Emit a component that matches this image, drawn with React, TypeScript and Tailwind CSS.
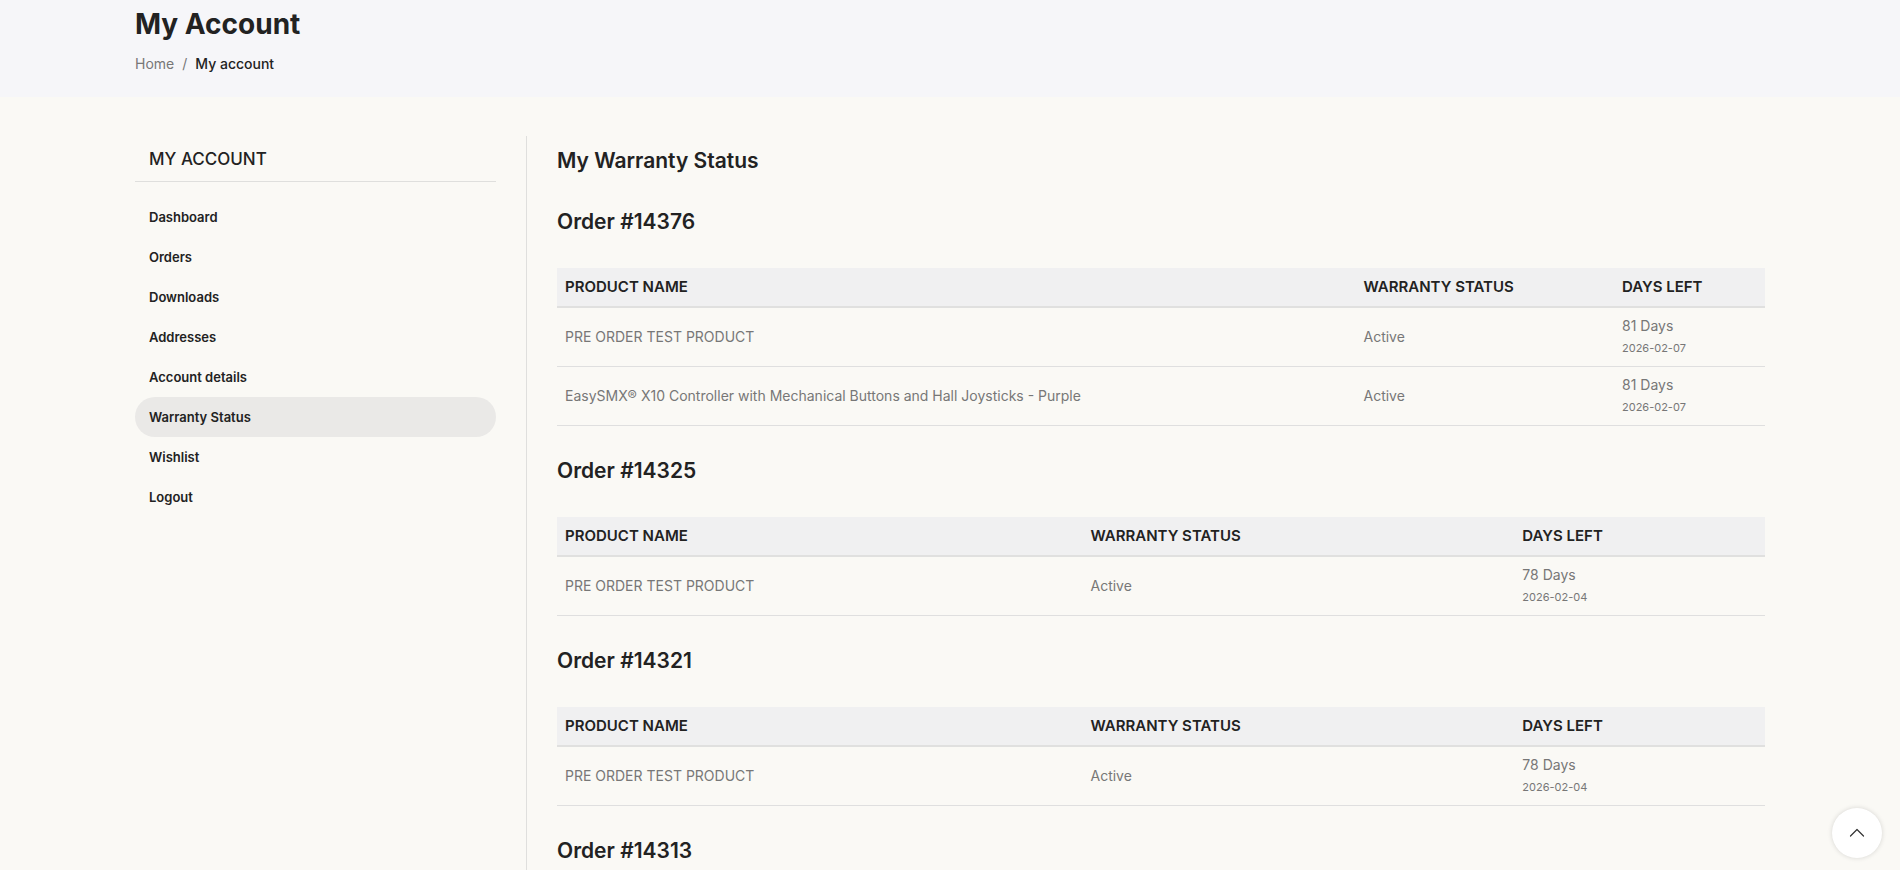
import { clsx } from "clsx";

interface WarrantyItem {
  product: string;
  status: string;
  daysLeft: number;
  expires: string;
}

interface Order {
  id: number;
  items: WarrantyItem[];
}

const menuItems = [
  "Dashboard",
  "Orders",
  "Downloads",
  "Addresses",
  "Account details",
  "Warranty Status",
  "Wishlist",
  "Logout",
];

const orders: Order[] = [
  {
    id: 14376,
    items: [
      { product: "PRE ORDER TEST PRODUCT", status: "Active", daysLeft: 81, expires: "2026-02-07" },
      {
        product: "EasySMX® X10 Controller with Mechanical Buttons and Hall Joysticks - Purple",
        status: "Active",
        daysLeft: 81,
        expires: "2026-02-07",
      },
    ],
  },
  {
    id: 14325,
    items: [
      { product: "PRE ORDER TEST PRODUCT", status: "Active", daysLeft: 78, expires: "2026-02-04" },
    ],
  },
  {
    id: 14321,
    items: [
      { product: "PRE ORDER TEST PRODUCT", status: "Active", daysLeft: 78, expires: "2026-02-04" },
    ],
  },
  { id: 14313, items: [] },
];

export default function App() {
  return (
    <div className="flex min-h-screen flex-col bg-[#faf9f5] font-['Inter',sans-serif] text-sm text-[#777777]">
      <PageHeader />
      <div className="mx-auto flex w-full max-w-[1660px] flex-1 px-[15px] pt-[39px]">
        <Sidebar active="Warranty Status" />
        <main className="min-w-0 flex-1 pt-3 pl-[30px]">
          <h2 className="mb-[3px] text-[21px] leading-[26px] font-semibold text-[#222222]">
            My Warranty Status
          </h2>
          {orders.map((order) => (
            <OrderSection key={order.id} order={order} />
          ))}
        </main>
      </div>
      <BackToTop />
    </div>
  );
}

function PageHeader() {
  return (
    <header className="bg-[#f6f6f9]">
      <div className="mx-auto w-full max-w-[1660px] px-[15px] pt-1.5 pb-[21px]">
        <h1 className="text-[28px] leading-9 font-bold text-[#222222]">My Account</h1>
        <nav aria-label="Breadcrumb" className="mt-2.5 flex gap-2 leading-6">
          <a href="#home">Home</a>
          <span>/</span>
          <span className="font-medium text-[#222222]">My account</span>
        </nav>
      </div>
    </header>
  );
}

function Sidebar({ active }: { active: string }) {
  return (
    <aside className="w-[392px] shrink-0 border-r border-[#dfdfdd] pr-[30px]">
      <h3 className="mb-[15px] border-b border-[#dfdfdd] px-3.5 pt-2.5 pb-[9px] text-[17px] leading-[26px] font-medium text-[#222222] uppercase">
        My account
      </h3>
      <nav aria-label="Account">
        <ul>
          {menuItems.map((item) => (
            <li key={item}>
              <a
                href="#account"
                aria-current={item === active ? "page" : undefined}
                className={clsx(
                  "block rounded-full px-3.5 text-[13px] leading-10 font-semibold text-[#222222]",
                  item === active && "bg-[#eae9e7]",
                )}
              >
                {item}
              </a>
            </li>
          ))}
        </ul>
      </nav>
    </aside>
  );
}

function OrderSection({ order }: { order: Order }) {
  const wide = order.items.length > 1;
  return (
    <section className="pt-8">
      <h3 className="text-[21px] leading-[26px] font-semibold text-[#222222]">
        Order #{order.id}
      </h3>
      {order.items.length > 0 && (
        <table className="mt-[33px] w-full table-fixed border-separate border-spacing-0 text-left">
          <colgroup>
            <col className={wide ? "w-[66.1%]" : "w-[43.5%]"} />
            <col className={wide ? "w-[21.4%]" : "w-[35.75%]"} />
            <col />
          </colgroup>
          <thead className="bg-[#f0f0f1] text-[15px] leading-[22px] text-[#222222] uppercase">
            <tr>
              <HeadCell>Product Name</HeadCell>
              <HeadCell>Warranty Status</HeadCell>
              <HeadCell>Days Left</HeadCell>
            </tr>
          </thead>
          <tbody className="leading-[22px]">
            {order.items.map((item) => (
              <tr key={item.product}>
                <Cell>{item.product}</Cell>
                <Cell>{item.status}</Cell>
                <Cell>
                  <div>{item.daysLeft} Days</div>
                  <div className="text-[11px]">{item.expires}</div>
                </Cell>
              </tr>
            ))}
          </tbody>
        </table>
      )}
    </section>
  );
}

function HeadCell({ children }: { children: React.ReactNode }) {
  return <th className="border-b-2 border-[#e0e0df] p-2 font-semibold">{children}</th>;
}

function Cell({ children }: { children: React.ReactNode }) {
  return <td className="border-b border-[#dfdfdf] px-2 py-[7px]">{children}</td>;
}

function BackToTop() {
  return (
    <button
      type="button"
      aria-label="Back to top"
      onClick={() => window.scrollTo({ top: 0, behavior: "smooth" })}
      className="fixed right-[18px] bottom-3 flex size-[50px] items-center justify-center rounded-full bg-white text-[#333333] shadow-[0_0_5px_rgba(0,0,0,0.15)]"
    >
      <svg width="16" height="10" viewBox="0 0 16 10" fill="none" stroke="currentColor" strokeWidth="1.2">
        <path d="M1.5 8 8 1.5 14.5 8" strokeLinecap="round" strokeLinejoin="round" />
      </svg>
    </button>
  );
}
